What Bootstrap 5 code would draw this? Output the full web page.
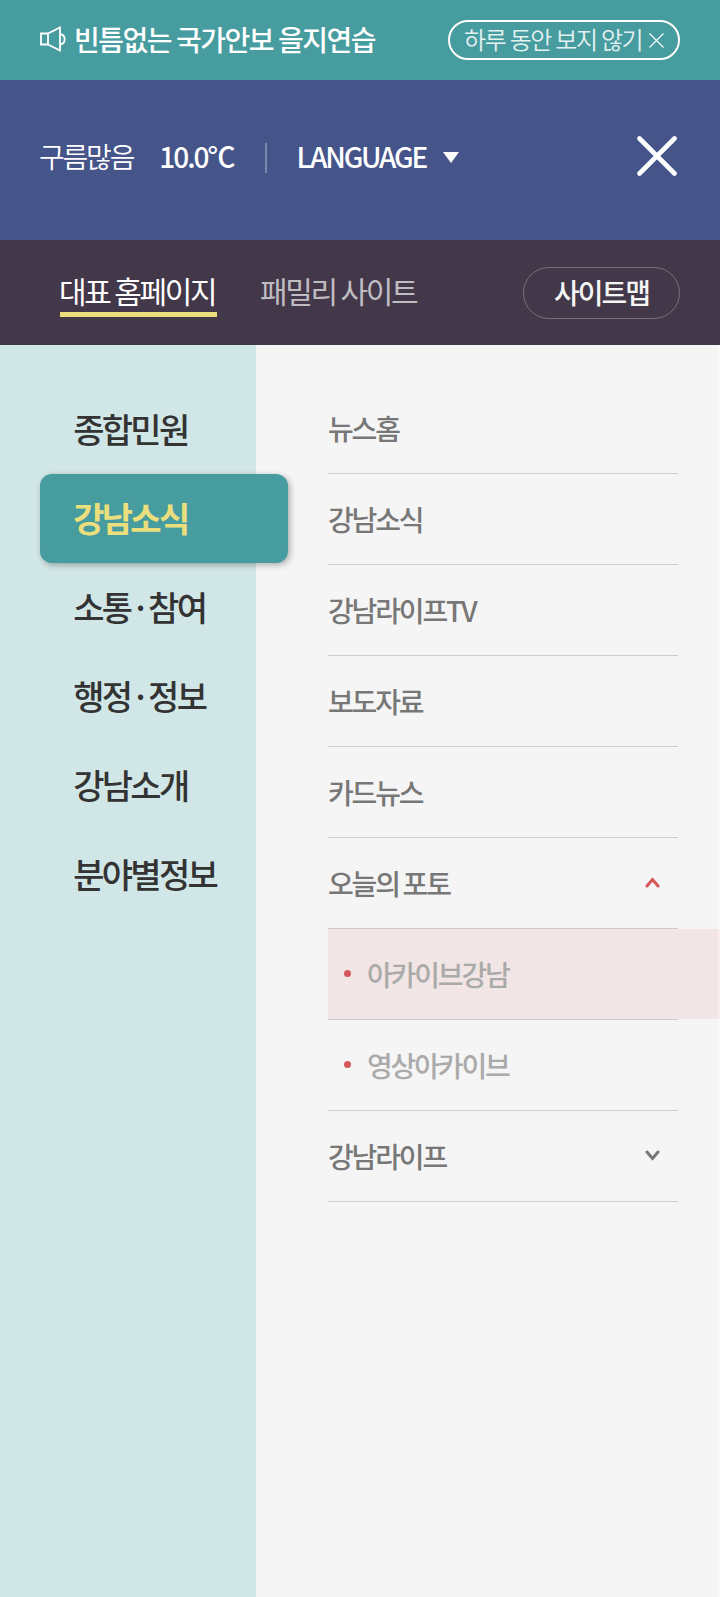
<!DOCTYPE html>
<html lang="ko">
<head>
<meta charset="utf-8">
<meta name="viewport" content="width=device-width, initial-scale=1">
<title>강남구청</title>
<link rel="stylesheet" href="https://cdn.jsdelivr.net/npm/bootstrap@5.3.0/dist/css/bootstrap.min.css">
<style>
  body { font-family: "Noto Sans CJK KR", "Noto Sans KR", sans-serif; font-size: 28px; letter-spacing: -2.15px; word-spacing: -2px; line-height: 40px; background: #f5f5f5; white-space: nowrap; overflow-x: hidden; }
  a, a:hover { color: inherit; text-decoration: none; }
  svg { display: block; flex: none; }
  .page { min-height: 1597px; }
  .medium { font-weight: 500; }
  .notice { height: 80px; background: #469c9f; color: #fff; padding: 0 40px; }
  .notice svg { margin-bottom: 2px; }
  .notice-title { font-weight: 500; letter-spacing: -1.55px; word-spacing: -1.1px; margin: 0 0 3px 8px; }
  .notice-off { width: 232px; height: 40px; border: 2px solid #fff; border-radius: 20px; padding: 0 14px; font-size: 24px; font-weight: 350; letter-spacing: -1.35px; word-spacing: -1.2px; color: #e4f1f1; background: none; }
  .notice-off span { margin-bottom: 2px; }
  .notice-off svg { margin: 0; }
  .util { height: 160px; background: #455489; color: #fff; padding: 0 43px 8px 39px; }
  .util-sep { width: 2px; height: 30px; background: #7c87ac; margin-top: 4px; }
  .weather { font-weight: 350; letter-spacing: -2.2px; }
  .temp { letter-spacing: -2px; margin-left: 26px; margin-right: 32px; }
  .lang { letter-spacing: -2.15px; margin-left: 29px; margin-right: 17px; }
  .tri { margin-top: 3px; }
  .tabs { height: 105px; background: #423849; padding: 0 40px 0 60px; font-size: 30px; letter-spacing: -2.3px; word-spacing: -1.5px; }
  .tab-link { height: 50px; line-height: 46px; margin-bottom: 1px; text-indent: -1px; color: #c0bdc2; }
  .tab-link + .tab-link { margin-left: 44px; }
  .tab-link.on { color: #fff; border-bottom: 5px solid #eadf7c; padding-right: 1.5px; }
  .sitemap { width: 157px; height: 52px; margin-top: 1px; padding: 0 0 2px 0; border: 1px solid #77707c; border-radius: 26px; font-size: 28px; font-weight: 500; letter-spacing: -2px; color: #f5f5f5; }
  .side { width: 256px; background: #d1e6e6; padding: 40px 0 0 40px; font-size: 34px; font-weight: 500; letter-spacing: -2.75px; word-spacing: -1.6px; color: #333; }
  .side a { display: flex; align-items: center; height: 89px; width: 248px; padding: 0 0 2px 33.3px; }
  .side .current { background: #469c9f; color: #eadf7c; font-weight: 700; border-radius: 12px; box-shadow: 2px 2px 6px rgba(0,0,0,.3); position: relative; }
  .sub { padding: 38px 0 0 72px; font-weight: 500; color: #777; border-right: 2px solid #f9f9f9; }
  .sub-row { display: flex; align-items: center; justify-content: space-between; height: 91px; width: 350px; border-bottom: 1px solid #ccc; padding: 0 18px 1px 0; position: relative; }
  .sub-child { justify-content: flex-start; color: #aaa; padding-left: 16px; }
  .sub-child::before { content: ""; width: 7px; height: 7px; border-radius: 50%; background: #d4575b; margin: 0 16px 1px 0; }
  .hot { background: #f2e5e5; }
  .hot::after { content: ""; position: absolute; left: 100%; top: 0; bottom: 0; width: 42px; background: linear-gradient(90deg, #f2e5e5 40px, #fbeded 40px); }
</style>
</head>
<body>
<div class="page d-flex flex-column">
  <div class="notice d-flex align-items-center justify-content-between">
    <a href="#" class="d-flex align-items-center">
      <svg width="26" height="26" viewBox="0 0 26 26" fill="none" stroke="#fff" stroke-width="1.8"><path d="M1 7.500h7v11H1zM8 7.500l12-6v23L8 18.500M20 8c6.200 1 6.200 9.500 0 10.500"/></svg>
      <span class="notice-title">빈틈없는 국가안보 을지연습</span>
    </a>
    <button class="notice-off d-flex align-items-center justify-content-between"><span>하루 동안 보지 않기</span>
      <svg width="15" height="15" viewBox="0 0 15 15" stroke="#fff" stroke-width="1.1"><path d="M.5.5l14 14M14.5.5l-14 14"/></svg>
    </button>
  </div>
  <header class="util d-flex align-items-center">
    <span class="weather">구름많음</span>
    <span class="medium temp">10.0℃</span>
    <span class="util-sep"></span>
    <a href="#" class="medium lang">LANGUAGE</a>
    <svg class="tri" width="16" height="11" viewBox="0 0 16 11" fill="#fff"><path d="M0 0h16L8 11z"/></svg>
    <svg class="ms-auto" width="40" height="40" viewBox="0 0 40 40" stroke="#fff" stroke-width="4.600" stroke-linecap="round"><path d="M2.500 2.500l35 35M37.500 2.500l-35 35"/></svg>
  </header>
  <nav class="tabs d-flex align-items-center">
    <a href="#" class="tab-link on">대표 홈페이지</a>
    <a href="#" class="tab-link">패밀리 사이트</a>
    <a href="#" class="sitemap ms-auto d-flex align-items-center justify-content-center">사이트맵</a>
  </nav>
  <main class="d-flex flex-grow-1">
    <nav class="side flex-shrink-0">
      <a href="#">종합민원</a>
      <a href="#" class="current">강남소식</a>
      <a href="#">소통 · 참여</a>
      <a href="#">행정 · 정보</a>
      <a href="#">강남소개</a>
      <a href="#">분야별정보</a>
    </nav>
    <nav class="sub flex-grow-1">
      <a href="#" class="sub-row">뉴스홈</a>
      <a href="#" class="sub-row">강남소식</a>
      <a href="#" class="sub-row">강남라이프TV</a>
      <a href="#" class="sub-row">보도자료</a>
      <a href="#" class="sub-row">카드뉴스</a>
      <a href="#" class="sub-row">오늘의 포토
        <svg width="15" height="11" viewBox="0 0 15 11" fill="none" stroke="#d4575b" stroke-width="3" stroke-linecap="round"><path d="M2 9l5.500-6.500L13 9"/></svg></a>
      <a href="#" class="sub-row sub-child hot">아카이브강남</a>
      <a href="#" class="sub-row sub-child">영상아카이브</a>
      <a href="#" class="sub-row">강남라이프
        <svg width="15" height="11" viewBox="0 0 15 11" fill="none" stroke="#777" stroke-width="3" stroke-linecap="round"><path d="M2 2l5.500 6.500L13 2"/></svg></a>
    </nav>
  </main>
</div>
<script src="https://cdn.jsdelivr.net/npm/bootstrap@5.3.0/dist/js/bootstrap.bundle.min.js"></script>
</body>
</html>
